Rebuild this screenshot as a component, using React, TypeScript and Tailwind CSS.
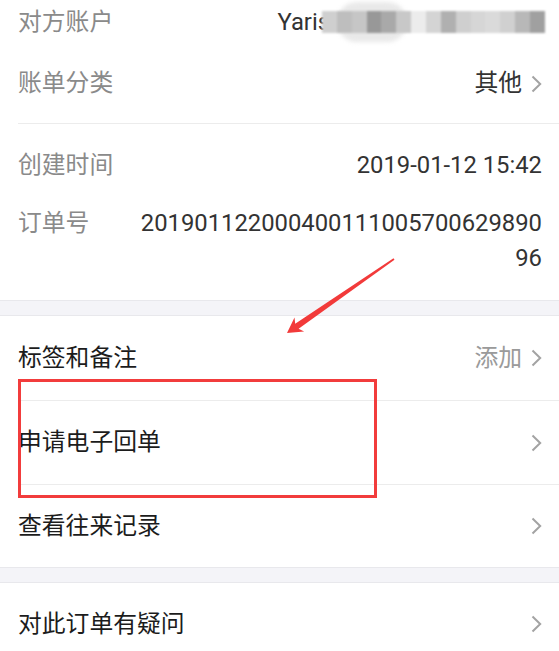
import React from 'react';

const font = "font-['Roboto','Noto_Sans_CJK_SC',sans-serif]";

// blurred-out account name blocks
const mosaic = [
  '#cfcfcf', '#bebebe', '#c6c6c6', '#989898', '#a9a9a9', '#c8c8c8', '#ececec',
  '#d4d4d4', '#b0b0b0', '#cfcfcf', '#d6d6d6', '#dadada', '#d0d0d0', '#b8b8b8', '#a0a0a0',
];

function Chevron() {
  return (
    <svg width="11" height="18" viewBox="0 0 11 18" fill="none">
      <path d="M1.5 1.5 L9.2 9 L1.5 16.5" stroke="#a3a3a3" strokeWidth="2" />
    </svg>
  );
}

function Divider() {
  return <div className="ml-[18px] h-px bg-[#ececec]" />;
}

function Band() {
  return <div className="h-[16px] border-y border-[#e8e8ec] bg-[#f4f4f8]" />;
}

function ListRow({ title, extra, h }: { title: string; extra?: string; h: string }) {
  return (
    <div className={`flex items-center justify-between pl-[18px] pr-[17px] ${h}`}>
      <span className="text-[#1c1c1c]">{title}</span>
      <div className="flex items-center gap-[9px]">
        {extra && <span className="text-[#9a9a9a]">{extra}</span>}
        <Chevron />
      </div>
    </div>
  );
}

export default function App() {
  return (
    <div className={`relative h-[651px] w-full overflow-hidden bg-white text-[23.8px] leading-[35px] ${font}`}>
      {/* Details */}
      <div className="flex h-[44px] items-center justify-between pl-[18px] pr-[17px]">
        <span className="text-[#8a8a8a]">对方账户</span>
        <div className="flex items-center">
          <span className="text-[#333]">Yaris</span>
          <div className="relative -ml-[8px] -mr-[3px] h-[22px] w-[223px]">
            <div className="absolute left-[15px] top-[-9px] h-[40px] w-[70px] rounded-full bg-[#e9e9e9] blur-[2px]" />
            <div className="relative flex h-full blur-[1px]">
              {mosaic.map((c, i) => (
                <div key={i} className="h-full flex-1" style={{ backgroundColor: c }} />
              ))}
            </div>
          </div>
        </div>
      </div>
      <div className="flex h-[79px] items-center justify-between pl-[18px] pr-[17px]">
        <span className="text-[#8a8a8a]">账单分类</span>
        <div className="flex items-center gap-[9px]">
          <span className="text-[#333]">其他</span>
          <Chevron />
        </div>
      </div>
      <Divider />
      <div className="flex h-[82px] items-center justify-between pl-[18px] pr-[17px]">
        <span className="text-[#8a8a8a]">创建时间</span>
        <span className="text-[#333]">2019-01-12 15:42</span>
      </div>
      <div className="flex items-start justify-between pl-[18px] pr-[17px] pb-[24px]">
        <span className="text-[#8a8a8a]">订单号</span>
        <div className="flex flex-col items-end text-[#333]">
          <span>201901122000400111005700629890</span>
          <span>96</span>
        </div>
      </div>

      <Band />
      <ListRow title="标签和备注" extra="添加" h="h-[84px]" />
      <Divider />
      <ListRow title="申请电子回单" h="h-[83px]" />
      <Divider />
      <ListRow title="查看往来记录" h="h-[82px]" />
      <Band />
      <ListRow title="对此订单有疑问" h="h-[82px]" />

      {/* Annotations */}
      <div className="pointer-events-none absolute left-[18px] top-[379px] h-[119px] w-[359px] border-[3px] border-[#f23c3c]" />
      <svg className="pointer-events-none absolute left-0 top-0" width="559" height="651" viewBox="0 0 559 651">
        <polygon
          points="287,333 304.1,331.5 298.6,328.7 394.5,259.7 393.5,258.3 295.2,323.7 294.5,317.5"
          fill="#f23a3a"
        />
      </svg>
    </div>
  );
}
